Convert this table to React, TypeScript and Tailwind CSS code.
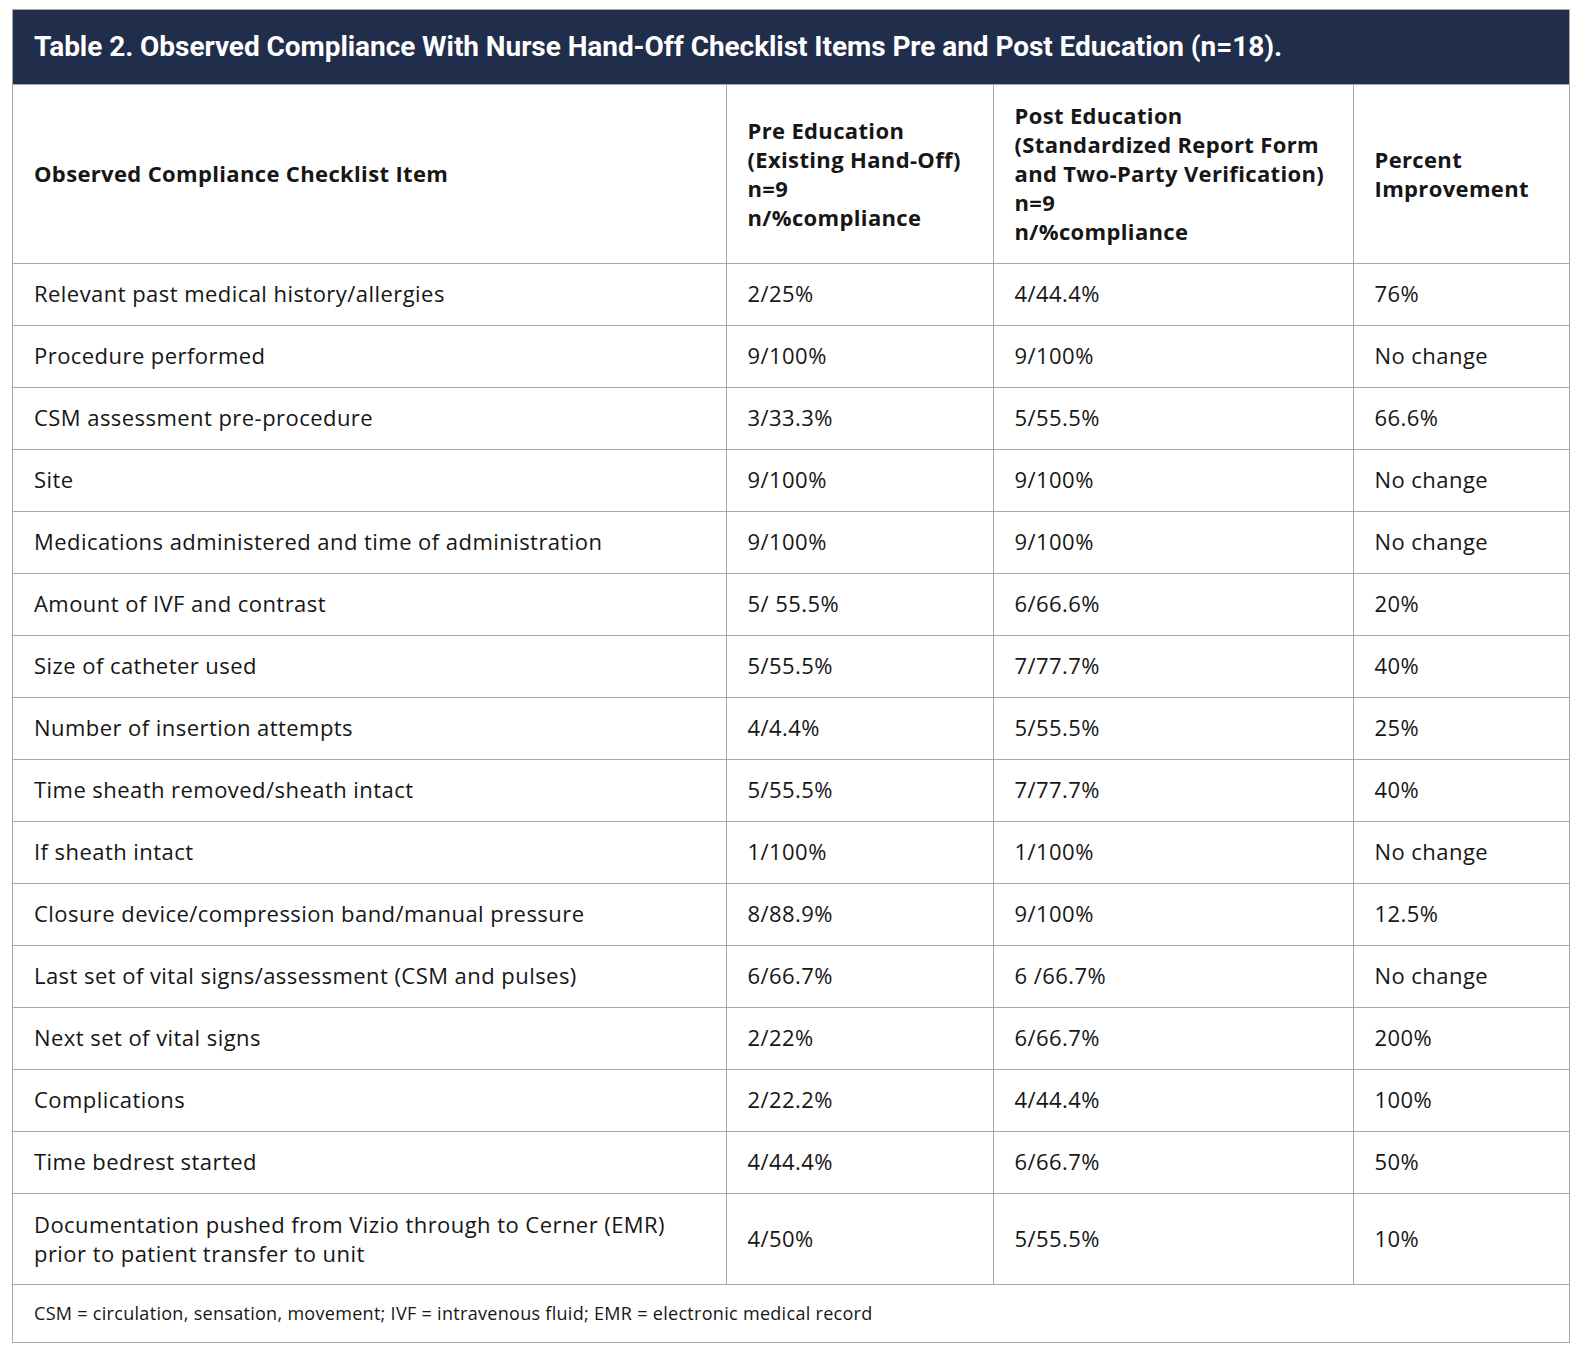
const rows: [string, string, string, string][] = [
  ["Relevant past medical history/allergies", "2/25%", "4/44.4%", "76%"],
  ["Procedure performed", "9/100%", "9/100%", "No change"],
  ["CSM assessment pre-procedure", "3/33.3%", "5/55.5%", "66.6%"],
  ["Site", "9/100%", "9/100%", "No change"],
  ["Medications administered and time of administration", "9/100%", "9/100%", "No change"],
  ["Amount of IVF and contrast", "5/ 55.5%", "6/66.6%", "20%"],
  ["Size of catheter used", "5/55.5%", "7/77.7%", "40%"],
  ["Number of insertion attempts", "4/4.4%", "5/55.5%", "25%"],
  ["Time sheath removed/sheath intact", "5/55.5%", "7/77.7%", "40%"],
  ["If sheath intact", "1/100%", "1/100%", "No change"],
  ["Closure device/compression band/manual pressure", "8/88.9%", "9/100%", "12.5%"],
  ["Last set of vital signs/assessment (CSM and pulses)", "6/66.7%", "6 /66.7%", "No change"],
  ["Next set of vital signs", "2/22%", "6/66.7%", "200%"],
  ["Complications", "2/22.2%", "4/44.4%", "100%"],
  ["Time bedrest started", "4/44.4%", "6/66.7%", "50%"],
];

export default function App() {
  return (
    <div className="min-h-screen bg-white pt-[9px] pl-[12px] font-['Open_Sans',sans-serif] text-[#161616]">
      <div className="w-[1558px] border border-[#a8a8a8]">
        <div className="h-[75px] bg-[#202d4b] flex items-center pl-[21px] border-b border-[#a8a8a8]">
          <h1 className="text-white font-bold text-[28px] tracking-[-0.06px] font-['Roboto',sans-serif]">
            Table 2. Observed Compliance With Nurse Hand-Off Checklist Items Pre and Post Education (n=18).
          </h1>
        </div>
        <table className="w-full border-collapse table-fixed text-[22px] leading-[29px] tracking-[0.45px]">
          <colgroup>
            <col className="w-[713px]" />
            <col className="w-[267px]" />
            <col className="w-[360px]" />
            <col />
          </colgroup>
          <thead>
            <tr className="h-[178px] font-bold tracking-[0.35px]">
              <th className="text-left align-middle px-[21px] border-b border-[#a8a8a8]">
                Observed Compliance Checklist Item
              </th>
              <th className="text-left align-middle px-[21px] border-b border-l border-[#a8a8a8]">
                Pre Education
                <br />
                (Existing Hand-Off)
                <br />
                n=9
                <br />
                n/%compliance
              </th>
              <th className="text-left align-middle pl-[21px] pr-[10px] border-b border-l border-[#a8a8a8]">
                Post Education
                <br />
                (Standardized Report Form
                <br />
                and Two-Party Verification)
                <br />
                n=9
                <br />
                n/%compliance
              </th>
              <th className="text-left align-middle px-[21px] border-b border-l border-[#a8a8a8]">
                Percent
                <br />
                Improvement
              </th>
            </tr>
          </thead>
          <tbody>
            {rows.map((r) => (
              <tr key={r[0]} className="h-[62px]">
                <td className="px-[21px] pb-[2px] border-b border-[#a8a8a8]">{r[0]}</td>
                <td className="px-[21px] pb-[2px] border-b border-l border-[#a8a8a8]">{r[1]}</td>
                <td className="px-[21px] pb-[2px] border-b border-l border-[#a8a8a8]">{r[2]}</td>
                <td className="px-[21px] pb-[2px] border-b border-l border-[#a8a8a8]">{r[3]}</td>
              </tr>
            ))}
            <tr className="h-[91px]">
              <td className="px-[21px] border-b border-[#a8a8a8]">
                Documentation pushed from Vizio through to Cerner (EMR)
                <br />
                prior to patient transfer to unit
              </td>
              <td className="px-[21px] border-b border-l border-[#a8a8a8]">4/50%</td>
              <td className="px-[21px] border-b border-l border-[#a8a8a8]">5/55.5%</td>
              <td className="px-[21px] border-b border-l border-[#a8a8a8]">10%</td>
            </tr>
            <tr className="h-[58px]">
              <td colSpan={4} className="px-[21px] text-[18px] tracking-[0.3px]">
                CSM = circulation, sensation, movement; IVF = intravenous fluid; EMR = electronic medical record
              </td>
            </tr>
          </tbody>
        </table>
      </div>
    </div>
  );
}
